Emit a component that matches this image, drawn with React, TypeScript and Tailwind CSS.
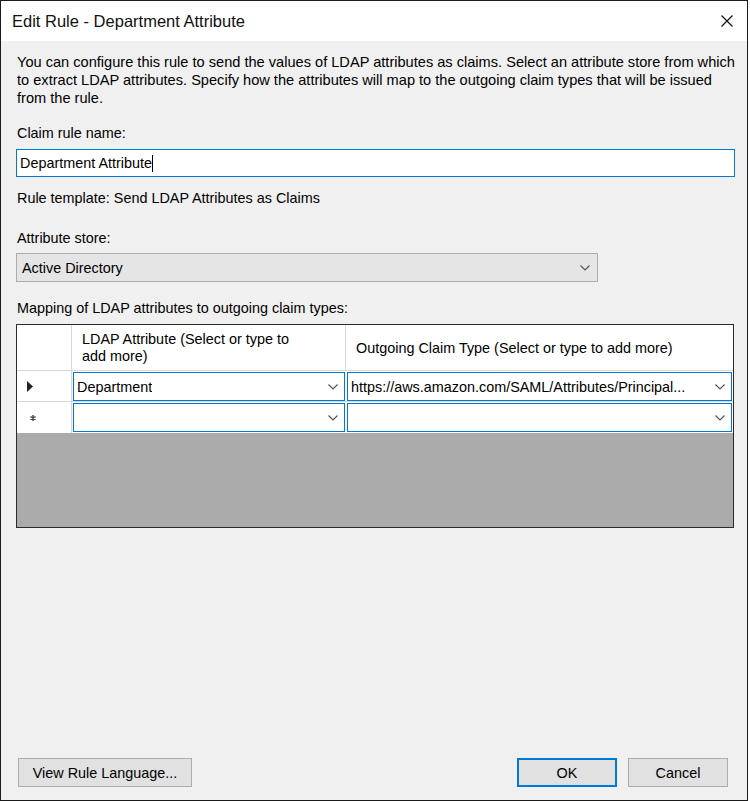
import React from 'react';

const Chevron = ({ className = '' }: { className?: string }) => (
  <svg width="10" height="6" viewBox="0 0 10 6" className={`shrink-0 ${className}`}>
    <path d="M0.5 0.5 L5 5 L9.5 0.5" fill="none" stroke="#505050" strokeWidth="1.1" />
  </svg>
);

function ComboCell({ value, width }: { value?: string; width: string }) {
  return (
    <div className={`${width} min-w-0 h-[29px] border border-[#0078d7] bg-white flex items-center justify-between pl-[3px] pr-[6px]`}>
      <span className="whitespace-nowrap overflow-hidden">{value}</span>
      <Chevron />
    </div>
  );
}

export default function App() {
  return (
    <div className="w-[750px] h-[801px] bg-white text-[14.4px] text-black" style={{ fontFamily: '"Liberation Sans", Arial, sans-serif' }}>
      <div className="w-[748px] h-[801px] border border-[#1a1a1a] flex flex-col">
        {/* title bar */}
        <div className="h-[40px] bg-white flex items-center justify-between pl-[11px] pr-[14px]">
          <span className="text-[16.5px] text-[#111]">Edit Rule - Department Attribute</span>
          <svg width="12" height="12" viewBox="0 0 12 12">
            <path d="M0.5 0.5 L11.5 11.5 M11.5 0.5 L0.5 11.5" stroke="#111" strokeWidth="1.2" />
          </svg>
        </div>

        <div className="flex-1 bg-[#f0f0f0] pl-[15px] flex flex-col leading-[18px]">
          <p className="mt-[12px] pl-[1px] whitespace-nowrap text-[14.6px]">
            You can configure this rule to send the values of LDAP attributes as claims. Select an attribute store from which
            <br />
            to extract LDAP attributes. Specify how the attributes will map to the outgoing claim types that will be issued
            <br />
            from the rule.
          </p>

          <div className="mt-[17px] pl-[1px]">Claim rule name:</div>
          <div className="mt-[7px] w-[719px] h-[28px] border border-[#0078d7] bg-white flex items-center pl-[3px]">
            <span>Department Attribute</span>
            <span className="w-[1px] h-[17px] bg-black" />
          </div>

          <div className="mt-[12px] pl-[1px]">Rule template: Send LDAP Attributes as Claims</div>

          <div className="mt-[22px] pl-[1px]">Attribute store:</div>
          <div className="mt-[6px] w-[582px] h-[29px] border border-[#adadad] bg-[#e5e5e5] flex items-center justify-between pl-[5px] pr-[7px]">
            <span>Active Directory</span>
            <Chevron />
          </div>

          <div className="mt-[17px] pl-[1px]">Mapping of LDAP attributes to outgoing claim types:</div>

          {/* data grid */}
          <div className="mt-[7px] w-[718px] h-[204px] border border-[#2b2b2b] bg-[#ababab] flex flex-col">
            <div className="h-[46px] bg-white flex border-b border-[#d8d8d8]">
              <div className="w-[55px] shrink-0 border-r border-[#d8d8d8]" />
              <div className="w-[274px] shrink-0 border-r border-[#d8d8d8] pl-[10px] pt-[6px] leading-[17px]">
                LDAP Attribute (Select or type to
                <br />
                add more)
              </div>
              <div className="flex-1 flex items-center pl-[10px] whitespace-nowrap">Outgoing Claim Type (Select or type to add more)</div>
            </div>

            <div className="h-[31px] bg-white flex border-b border-[#d8d8d8]">
              <div className="w-[55px] shrink-0 border-r border-[#d8d8d8] flex items-center pl-[10px]">
                <svg width="6" height="11" viewBox="0 0 6 11">
                  <path d="M0 0 L6 5.5 L0 11 Z" fill="#222" />
                </svg>
              </div>
              <div className="flex-1 min-w-0 flex gap-[2px] pt-[1px] pl-[1px] pr-[1px]">
                <ComboCell value="Department" width="w-[272px] shrink-0" />
                <ComboCell value="https://aws.amazon.com/SAML/Attributes/Principal..." width="flex-1" />
              </div>
            </div>

            <div className="h-[31px] bg-white flex">
              <div className="w-[55px] shrink-0 border-r border-[#d8d8d8] flex items-center pl-[13px]">
                <svg width="6" height="6" viewBox="0 0 6 6">
                  <path d="M3 0 V6 M0.4 1.5 L5.6 4.5 M0.4 4.5 L5.6 1.5" stroke="#444" strokeWidth="1.4" />
                </svg>
              </div>
              <div className="flex-1 min-w-0 flex gap-[2px] pt-[1px] pl-[1px] pr-[1px]">
                <ComboCell width="w-[272px] shrink-0" />
                <ComboCell width="flex-1" />
              </div>
            </div>
          </div>

          {/* buttons */}
          <div className="mt-auto mb-[13px] flex items-center pr-[19px]">
            <button className="ml-[2px] w-[174px] h-[29px] border border-[#adadad] bg-[#e1e1e1] text-center">View Rule Language...</button>
            <button className="ml-auto w-[100px] h-[29px] border-2 border-[#0078d7] bg-[#e1e1e1] text-center">OK</button>
            <button className="ml-[11px] w-[100px] h-[29px] border border-[#adadad] bg-[#e1e1e1] text-center">Cancel</button>
          </div>
        </div>
      </div>
    </div>
  );
}
